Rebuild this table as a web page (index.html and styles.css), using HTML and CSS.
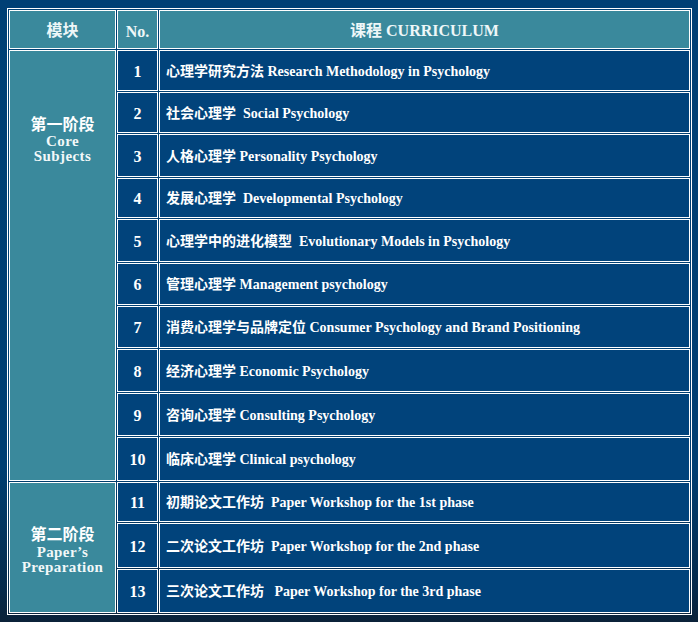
FILE: index.html
```html
<!DOCTYPE html>
<html lang="zh">
<head>
<meta charset="utf-8">
<title>课程 CURRICULUM</title>
<link rel="stylesheet" href="styles.css">
</head>
<body>
<table class="curr">
  <tr class="h39 head">
    <td class="c1">模块</td>
    <td class="c2 hno">No.</td>
    <td class="c3 hc">课程 CURRICULUM</td>
  </tr>
  <tr class="h41">
    <td class="stage stage1" rowspan="10">
      <div class="stage-cn">第一阶段</div>
      <div class="stage-en en1">Core<br>Subjects</div>
    </td>
    <td class="num">1</td>
    <td class="course">心理学研究方法 Research Methodology in Psychology</td>
  </tr>
  <tr class="h41"><td class="num">2</td><td class="course">社会心理学&nbsp; Social Psychology</td></tr>
  <tr class="h43"><td class="num">3</td><td class="course">人格心理学 Personality Psychology</td></tr>
  <tr class="h40"><td class="num">4</td><td class="course">发展心理学&nbsp; Developmental Psychology</td></tr>
  <tr class="h43"><td class="num">5</td><td class="course">心理学中的进化模型&nbsp; Evolutionary Models in Psychology</td></tr>
  <tr class="h42"><td class="num">6</td><td class="course">管理心理学 Management psychology</td></tr>
  <tr class="h42"><td class="num">7</td><td class="course">消费心理学与品牌定位 Consumer Psychology and Brand Positioning</td></tr>
  <tr class="h43"><td class="num">8</td><td class="course">经济心理学 Economic Psychology</td></tr>
  <tr class="h43"><td class="num">9</td><td class="course">咨询心理学 Consulting Psychology</td></tr>
  <tr class="h44"><td class="num">10</td><td class="course">临床心理学 Clinical psychology</td></tr>
  <tr class="h40">
    <td class="stage stage2" rowspan="3">
      <div class="stage-cn">第二阶段</div>
      <div class="stage-en en2">Paper’s<br>Preparation</div>
    </td>
    <td class="num">11</td>
    <td class="course">初期论文工作坊&nbsp; Paper Workshop for the 1st phase</td>
  </tr>
  <tr class="h45"><td class="num">12</td><td class="course">二次论文工作坊&nbsp; Paper Workshop for the 2nd phase</td></tr>
  <tr class="h44"><td class="num">13</td><td class="course">三次论文工作坊&nbsp;&nbsp; Paper Workshop for the 3rd phase</td></tr>
</table>
</body>
</html>
```
FILE: styles.css
```css
html, body {
  margin: 0;
  height: 100%;
}
body {
  padding: 8px 0 0 7px;
  box-sizing: border-box;
  background: linear-gradient(to bottom, #004075 0%, #003f72 75%, #062a4a 95%, #0b2239 100%);
  font-family: "Liberation Serif", "Noto Sans CJK SC", serif;
  font-weight: bold;
  color: #ffffff;
}
.curr {
  width: 685px;
  box-sizing: border-box;
  table-layout: fixed;
  border-collapse: separate;
  border-spacing: 1px;
  border: 1px solid #ffffff;
}
.curr td {
  box-sizing: border-box;
  border: 1px solid #ffffff;
  padding: 2px 0 0 0;
  background: #01437b;
  vertical-align: middle;
}
.head td {
  background: #3a899c;
  text-align: center;
  font-size: 16px;
  line-height: 18px;
  color: #eef7f8;
}
.curr .hno {
  padding-top: 4px;
}
.c1 { width: 107px; }
.c2 { width: 41px; }
.c3 { width: 531px; }
.h39 { height: 39px; }
.h40 { height: 40px; }
.h41 { height: 41px; }
.h42 { height: 42px; }
.h43 { height: 43px; }
.h44 { height: 44px; }
.h45 { height: 45px; }
.num {
  text-align: center;
  font-size: 16px;
  line-height: 18px;
}
.course {
  font-size: 14px;
  line-height: 16px;
  padding-left: 6px !important;
  white-space: nowrap;
}
.curr td.stage {
  background: #3a899c;
  text-align: center;
}
.curr td.stage1 {
  vertical-align: top;
  padding-top: 65px;
}
.curr td.stage2 {
  padding-top: 5px;
}
.stage-cn {
  font-size: 16px;
  line-height: 18px;
}
.stage-en {
  font-size: 15px;
  letter-spacing: 0.4px;
  color: #f2f8f9;
}
.en1 {
  line-height: 15px;
  margin-top: 0;
}
.en2 {
  line-height: 15px;
  margin-top: 1px;
}
```
